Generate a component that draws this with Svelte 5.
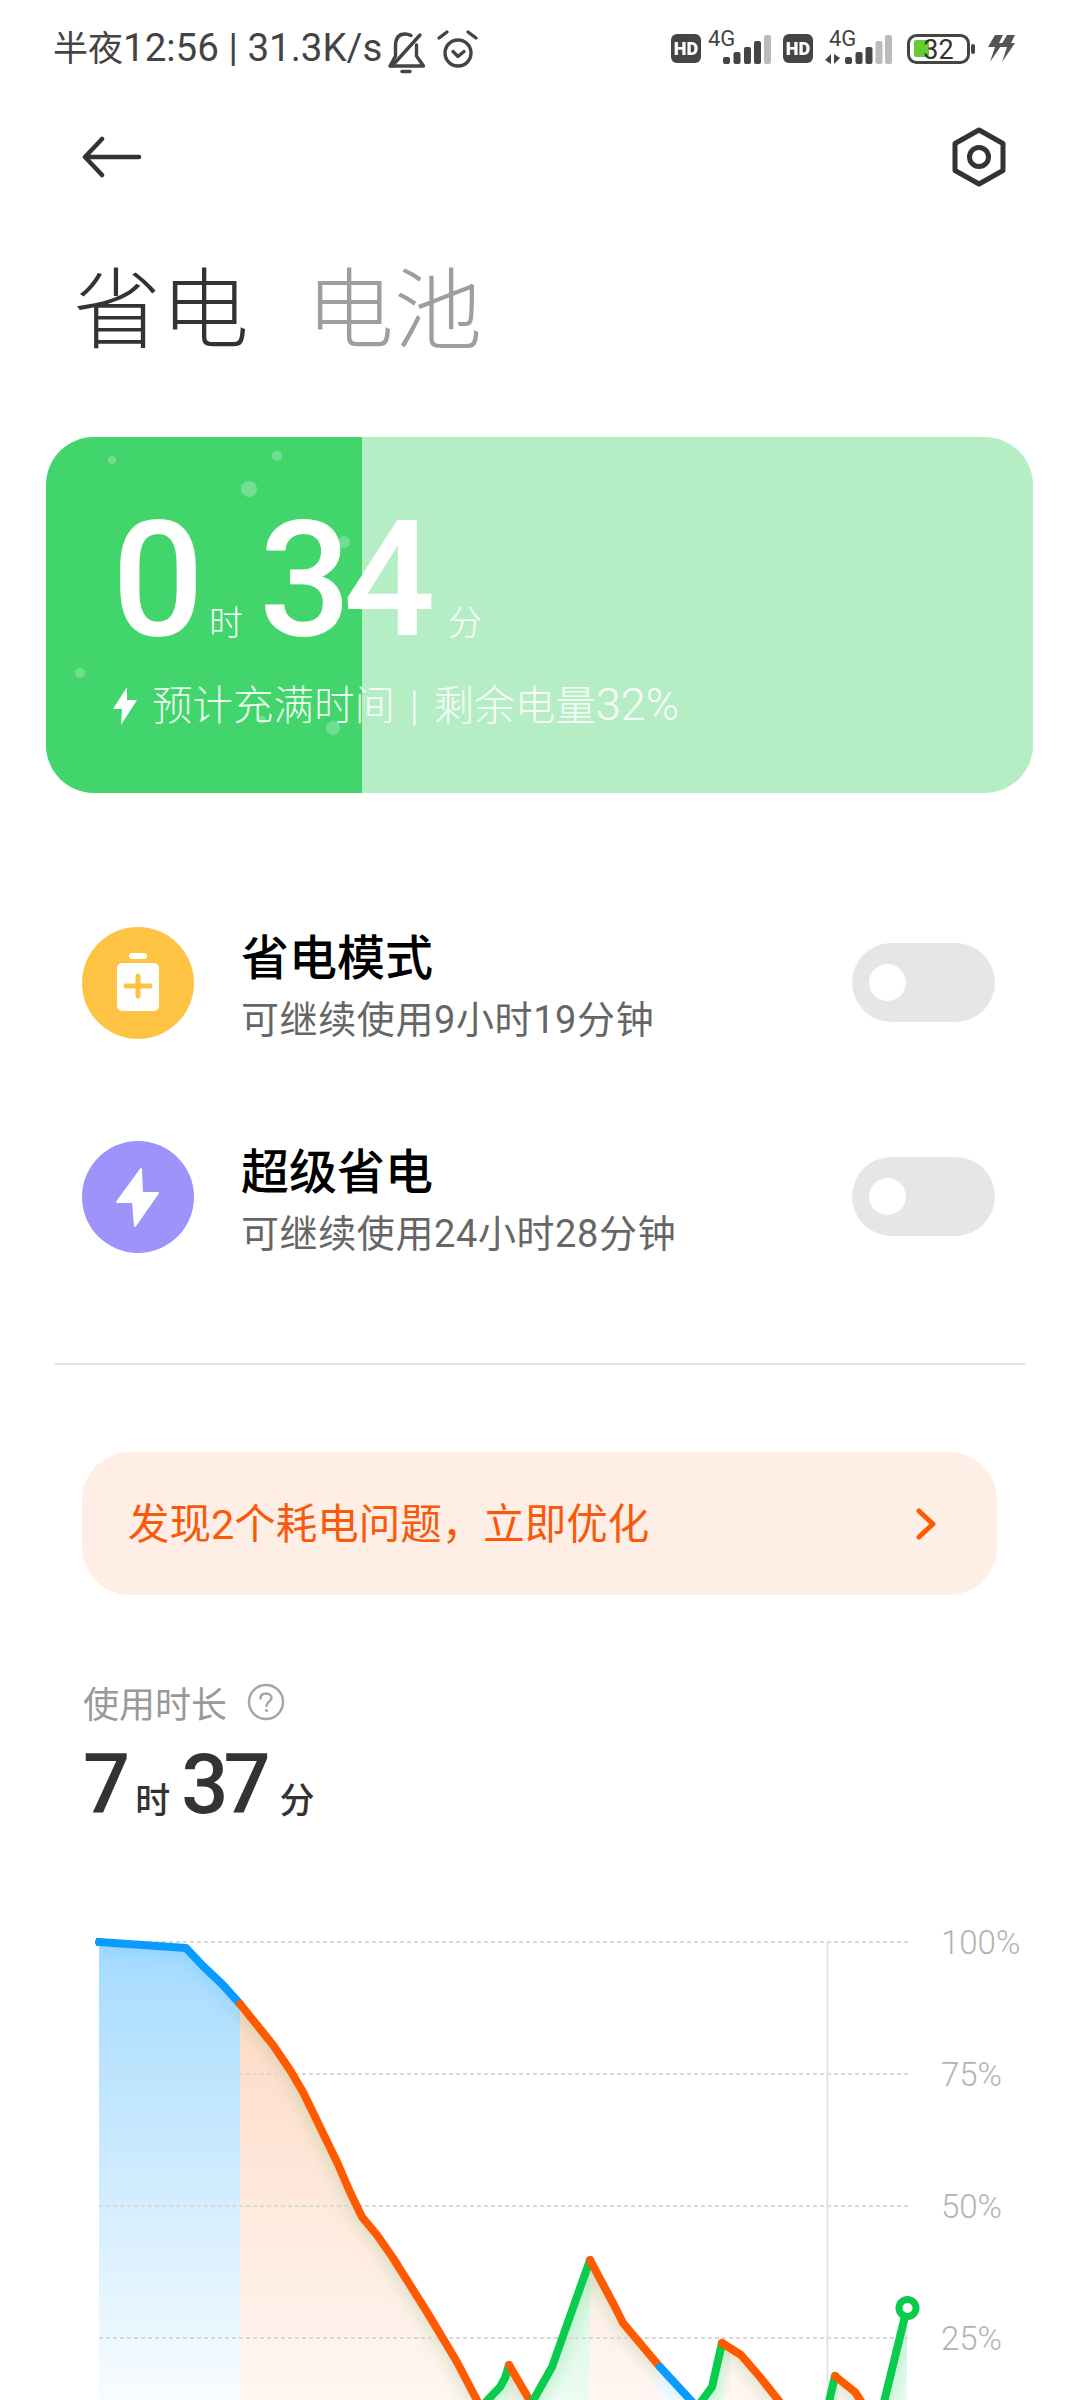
<script>
  const bubbles = [
    { x: 66, y: 23, r: 4 },
    { x: 231, y: 19, r: 5 },
    { x: 203, y: 52, r: 8 },
    { x: 298, y: 105, r: 6 },
    { x: 34, y: 236, r: 5 },
    { x: 287, y: 291, r: 7 },
    { x: 216, y: 283, r: 4 }
  ];

  const colors = { blue: "#0a9bff", orange: "#ff5a00", green: "#09cc4c" };
  const shadows = { blue: "#0a9bff", orange: "#7fae6a", green: "#09cc4c" };
  const shadowAlpha = { blue: 0.1, orange: 0.2, green: 0.15 };

  // Battery curve in page coordinates, split where the charge state changes.
  const segments = [
    { c: "blue", pts: [[99, 1942], [186, 1948], [203, 1966], [223, 1985], [240, 2004]] },
    { c: "orange", pts: [[240, 2004], [257, 2025], [273, 2045], [290, 2070], [303, 2092], [320, 2127], [337, 2162], [350, 2192], [362, 2217], [377, 2235], [393, 2258], [427, 2312], [457, 2362], [480, 2406]] },
    { c: "green", pts: [[482, 2406], [500, 2387], [505, 2378], [509, 2365]] },
    { c: "orange", pts: [[509, 2365], [533, 2406]] },
    { c: "green", pts: [[530, 2406], [552, 2367], [590, 2260]] },
    { c: "orange", pts: [[590, 2260], [614, 2305], [623, 2323], [660, 2367]] },
    { c: "blue", pts: [[660, 2367], [696, 2406]] },
    { c: "green", pts: [[698, 2406], [712, 2387], [722, 2343]] },
    { c: "orange", pts: [[722, 2343], [741, 2355], [760, 2377], [783, 2406]] },
    { c: "green", pts: [[828, 2406], [835, 2376]] },
    { c: "orange", pts: [[835, 2376], [855, 2392], [864, 2406]] },
    { c: "green", pts: [[883, 2406], [907, 2308]] }
  ];

  const line = (pts) => "M" + pts.map((p) => p.join(" ")).join("L");
  const area = (pts) =>
    line(pts) + `L${pts[pts.length - 1][0]} 2410L${pts[0][0]} 2410Z`;

  const grid = [
    { y: 1942, label: "100%" },
    { y: 2074, label: "75%" },
    { y: 2206, label: "50%" },
    { y: 2338, label: "25%" }
  ];

  const bars = [
    { x: 723, top: 57 },
    { x: 733.5, top: 52 },
    { x: 744, top: 47 },
    { x: 754, top: 41 },
    { x: 764, top: 35 }
  ];
  const bars2 = [
    { x: 845, top: 57, off: false },
    { x: 855.5, top: 52, off: false },
    { x: 865.5, top: 47, off: false },
    { x: 875.5, top: 41, off: true },
    { x: 885, top: 35, off: true }
  ];
</script>

<div class="page">
  <div class="status">
    <span class="clock"><span class="cn">半夜</span>12:56 | 31.3K/s</span>
    <svg class="st-left" width="94" height="48" viewBox="388 28 94 48" fill="none" stroke="#444" stroke-width="3.4" stroke-linecap="round" stroke-linejoin="round">
      <path d="M412 35.500C410 34.500 408 34 406 34C398 34 396.500 41 396.500 46V56L391 66H424.500L417.500 56V45" />
      <path d="M393 66L421 35" />
      <path d="M403 71.500H411" />
      <circle cx="459" cy="53" r="13" />
      <path d="M440 38L448 32M477 38L469 32" />
      <path d="M454 51.500L459 56.500L465 51.500" />
    </svg>
    <svg class="st-right" width="346" height="48" viewBox="670 20 346 48">
      <rect x="671" y="34" width="30" height="29" rx="6" fill="#444" />
      <text x="686" y="54.500" class="hd">HD</text>
      <text x="708" y="46" class="g4">4G</text>
      {#each bars as b, i}
        <rect x={b.x} y={b.top} width="7" height={64 - b.top} rx="2" fill={i === 4 ? "#bbb" : "#444"} />
      {/each}
      <rect x="783" y="34" width="30" height="29" rx="6" fill="#444" />
      <text x="798" y="54.500" class="hd">HD</text>
      <text x="829" y="46" class="g4">4G</text>
      <path d="M831 54V64L825 60ZM834 54V64L840 58Z" fill="#444" />
      {#each bars2 as b}
        <rect x={b.x} y={b.top} width="7" height={64 - b.top} rx="2" fill={b.off ? "#bbb" : "#444"} />
      {/each}
      <rect x="908.500" y="35.500" width="60" height="27" rx="8" fill="none" stroke="#444" stroke-width="3" />
      <rect x="914" y="40" width="15" height="17" rx="2" fill="#66cc33" />
      <text x="938.500" y="59" class="batt">32</text>
      <rect x="971" y="44" width="4" height="10" rx="2" fill="#444" />
      <path d="M995 35H1003L999 43H1003L990 62L995 47H988ZM1007 35H1015L1011 43H1015L1002 62L1007 47H1000Z" fill="#555" />
    </svg>
  </div>

  <div class="nav">
    <svg width="60" height="44" viewBox="0 0 60 44" fill="none" stroke="#333" stroke-width="4.500" stroke-linecap="round" stroke-linejoin="round">
      <path d="M3 22H57M20 4L3 22L20 40" />
    </svg>
    <svg width="54" height="60" viewBox="0 0 54 60" fill="none" stroke="#333" stroke-width="5" stroke-linejoin="round">
      <path d="M27 3L51 16.500V43.500L27 57L3 43.500V16.500Z" />
      <circle cx="27" cy="30" r="9.500" />
    </svg>
  </div>

  <div class="titles">
    <span class="on">省电</span>
    <span class="off">电池</span>
  </div>

  <div class="card">
    <div class="fill"></div>
    {#each bubbles as b}
      <i class="bubble" style="left:{b.x - b.r}px;top:{b.y - b.r}px;width:{b.r * 2}px;height:{b.r * 2}px"></i>
    {/each}
    <div class="card-body">
      <div class="big">
        <b>0</b><span class="unit u1">时</span><b>34</b><span class="unit u2">分</span>
      </div>
      <div class="sub">
        <svg width="26" height="40" viewBox="0 0 26 40" fill="#fff"><path d="M15 1L1 23H10L9 39L25 14H15Z" /></svg>
        <span>预计充满时间 | 剩余电量<span class="pc">32%</span></span>
      </div>
    </div>
  </div>

  <div class="modes">
    <div class="mode">
      <div class="ic yellow">
        <svg width="112" height="112" viewBox="0 0 112 112">
          <rect x="47" y="26" width="18" height="6" rx="3" fill="#fff" />
          <rect x="35" y="36" width="42" height="48" rx="5" fill="#fff" />
          <path d="M56 49V69M44 59H68" stroke="#ffc343" stroke-width="5" stroke-linecap="round" />
        </svg>
      </div>
      <div class="mode-text">
        <div class="mode-title">省电模式</div>
        <div class="mode-sub">可继续使用9小时19分钟</div>
      </div>
      <div class="toggle"><i></i></div>
    </div>
    <div class="mode">
      <div class="ic purple">
        <svg width="112" height="112" viewBox="0 0 112 112">
          <path d="M59 28L35 61H51L53 85L76 52H60Z" fill="#fff" stroke="#fff" stroke-width="2" stroke-linejoin="round" />
        </svg>
      </div>
      <div class="mode-text">
        <div class="mode-title">超级省电</div>
        <div class="mode-sub">可继续使用24小时28分钟</div>
      </div>
      <div class="toggle"><i></i></div>
    </div>
  </div>

  <div class="divider"></div>

  <div class="banner">
    <span class="banner-text">发现2个耗电问题，立即优化</span>
    <svg width="24" height="34" viewBox="0 0 24 34" fill="none" stroke="#ff5c00" stroke-width="5" stroke-linecap="round" stroke-linejoin="round">
      <path d="M5 4L19 17L5 30" />
    </svg>
  </div>

  <div class="usage">
    <div class="usage-label">
      <span>使用时长</span>
      <svg width="38" height="38" viewBox="0 0 38 38" fill="none">
        <circle cx="19" cy="19" r="17" stroke="#a6a6a6" stroke-width="2.500" />
        <path d="M13.500 15.500C13.500 12 16 10.500 19 10.500C22 10.500 24.500 12.500 24.500 15C24.500 18.500 19.500 18.500 19.500 23" stroke="#a6a6a6" stroke-width="2.500" stroke-linecap="round" />
        <circle cx="19.500" cy="27.500" r="1.600" fill="#a6a6a6" />
      </svg>
    </div>
    <div class="usage-value">
      <b>7</b><span class="uu1">时</span><b>37</b><span class="uu2">分</span>
    </div>
  </div>

  <svg class="chart" width="1080" height="500" viewBox="0 1900 1080 500">
    <defs>
      <linearGradient id="gblue" gradientUnits="userSpaceOnUse" x1="0" y1="1942" x2="0" y2="2400">
        <stop offset="0" stop-color="#0a9bff" stop-opacity="0.37" />
        <stop offset="1" stop-color="#0a9bff" stop-opacity="0.03" />
      </linearGradient>
      <linearGradient id="gorange" gradientUnits="userSpaceOnUse" x1="0" y1="1942" x2="0" y2="2400">
        <stop offset="0" stop-color="#ff5a00" stop-opacity="0.25" />
        <stop offset="1" stop-color="#ff5a00" stop-opacity="0.05" />
      </linearGradient>
      <linearGradient id="ggreen" gradientUnits="userSpaceOnUse" x1="0" y1="2200" x2="0" y2="2400">
        <stop offset="0" stop-color="#09cc4c" stop-opacity="0.2" />
        <stop offset="1" stop-color="#09cc4c" stop-opacity="0.07" />
      </linearGradient>
      <filter id="soft" x="-30%" y="-30%" width="160%" height="160%">
        <feGaussianBlur stdDeviation="7" />
      </filter>
      <clipPath id="under">
        {#each segments as s}
          <path d={area(s.pts)} />
        {/each}
      </clipPath>
    </defs>

    {#each segments as s}
      <path d={area(s.pts)} fill="url(#g{s.c})" />
    {/each}
    <g clip-path="url(#under)">
      {#each segments as s}
        <path d={line(s.pts)} fill="none" stroke={shadows[s.c]} stroke-opacity={shadowAlpha[s.c]} stroke-width="22" filter="url(#soft)" />
      {/each}
    </g>

    {#each grid as g}
      <line x1="99" x2="910" y1={g.y} y2={g.y} class="grid" />
      <text x="941" y={g.y + 12} class="pct">{g.label}</text>
    {/each}
    <line x1="827.500" x2="827.500" y1="1942" y2="2400" stroke="#e4e4e4" stroke-width="2" />

    {#each segments as s}
      <path d={line(s.pts)} fill="none" stroke={colors[s.c]} stroke-width="8" stroke-linejoin="round" stroke-linecap="round" />
    {/each}
    <path d="M96 1942H102" stroke={colors.blue} stroke-width="8" />
    <circle cx="907.500" cy="2308" r="8.500" fill="#fff" stroke={colors.green} stroke-width="7" />
  </svg>
</div>

<style>
  :global(body) {
    margin: 0;
    background: #fff;
  }

  .page {
    width: 1080px;
    height: 2400px;
    overflow: hidden;
    font-family: Roboto, "Noto Sans CJK SC", sans-serif;
    background: #fff;
  }

  .status {
    height: 100px;
    display: flex;
    align-items: flex-start;
    padding-left: 53px;
    box-sizing: border-box;
    position: relative;
  }
  .clock {
    font-size: 38.500px;
    line-height: 96px;
    color: #444;
    white-space: nowrap;
  }
  .cn {
    font-size: 35px;
  }
  .st-left {
    margin: 28px 0 0 5px;
  }
  .st-right {
    margin: 20px 64px 0 auto;
  }
  .hd {
    font-family: Roboto, sans-serif;
    font-size: 18px;
    font-weight: 900;
    fill: #fff;
    text-anchor: middle;
  }
  .g4 {
    font-family: Roboto, sans-serif;
    font-size: 22px;
    fill: #444;
  }
  .batt {
    font-family: Roboto, sans-serif;
    font-size: 27px;
    fill: #333;
    text-anchor: middle;
  }

  .nav {
    height: 114px;
    display: flex;
    align-items: center;
    justify-content: space-between;
    padding: 0 74px 0 82px;
  }

  .titles {
    margin: 47px 0 0 73px;
    height: 94px;
    line-height: 100px;
    font-size: 88px;
    font-weight: 300;
    display: flex;
    gap: 57px;
  }
  .on {
    color: #333;
  }
  .off {
    color: #9e9e9e;
  }

  .card {
    position: relative;
    margin: 82px 0 0 46px;
    width: 987px;
    height: 356px;
    border-radius: 48px;
    overflow: hidden;
    background: #b5eec5;
    color: #fff;
  }
  .fill {
    position: absolute;
    left: 0;
    top: 0;
    bottom: 0;
    width: 316px;
    background: #42d56c;
  }
  .bubble {
    position: absolute;
    border-radius: 50%;
    background: rgba(255, 255, 255, 0.25);
  }
  .card-body {
    position: relative;
    padding: 68px 0 0 66px;
  }
  .big {
    display: flex;
    align-items: baseline;
    height: 150px;
    line-height: 150px;
  }
  .big b {
    font-size: 162px;
    font-weight: 500;
    letter-spacing: -8px;
  }
  .unit {
    font-size: 34px;
    line-height: 40px;
    font-weight: 300;
  }
  .u1 {
    margin: 0 16px 0 13px;
  }
  .u2 {
    margin-left: 21px;
  }
  .sub {
    display: flex;
    align-items: center;
    gap: 14px;
    margin: 22px 0 0 0;
    font-size: 40.500px;
    line-height: 56px;
    font-weight: 300;
    word-spacing: 5px;
    color: rgba(255, 255, 255, 0.92);
    white-space: nowrap;
  }
  .pc {
    font-size: 45px;
  }

  .modes {
    margin-top: 134px;
    padding: 0 85px 0 82px;
    display: flex;
    flex-direction: column;
    gap: 102px;
  }
  .mode {
    display: flex;
    align-items: center;
    height: 112px;
  }
  .ic {
    width: 112px;
    height: 112px;
    border-radius: 50%;
    margin-right: 47px;
  }
  .ic svg {
    display: block;
  }
  .yellow {
    background: #ffc343;
  }
  .purple {
    background: #9d93fb;
  }
  .mode-text {
    padding-top: 10px;
  }
  .mode-title {
    font-size: 48px;
    line-height: 60px;
    font-weight: 500;
    color: #000;
  }
  .mode-sub {
    font-size: 38px;
    line-height: 54px;
    margin-top: 4px;
    letter-spacing: 0.6px;
    color: #666;
    white-space: nowrap;
  }
  .toggle {
    margin: -2px 0 0 auto;
    width: 143px;
    height: 79px;
    border-radius: 40px;
    background: #e6e6e6;
    display: flex;
    align-items: center;
    padding-left: 17px;
    box-sizing: border-box;
  }
  .toggle i {
    width: 37px;
    height: 37px;
    border-radius: 50%;
    background: #fff;
  }

  .divider {
    margin: 110px 55px 0;
    height: 2px;
    background: #e2e2e2;
  }

  .banner {
    margin: 87px 0 0 82px;
    width: 915px;
    height: 143px;
    box-sizing: border-box;
    padding: 0 59px 0 46px;
    border-radius: 48px;
    background: #ffeee6;
    color: #f9590b;
    font-size: 41.500px;
    display: flex;
    align-items: center;
    justify-content: space-between;
  }
  .banner-text {
    margin-top: -6px;
  }
  .banner svg {
    display: block;
  }

  .usage {
    height: 305px;
    box-sizing: border-box;
    padding: 85px 0 0 83px;
  }
  .usage-label {
    display: flex;
    align-items: center;
    gap: 20px;
    height: 44px;
    font-size: 36px;
    color: #999;
  }
  .usage-value {
    display: flex;
    align-items: baseline;
    margin-top: 16px;
    color: #333;
    height: 90px;
    line-height: 90px;
    font-weight: 500;
  }
  .usage-value b {
    font-size: 83px;
    font-weight: 500;
    letter-spacing: -5px;
  }
  .usage-value span {
    font-size: 35px;
    line-height: 40px;
  }
  .uu1 {
    margin: 0 11px 0 10px;
  }
  .uu2 {
    margin-left: 14px;
  }

  .chart {
    display: block;
  }
  .grid {
    stroke: #d8d8d8;
    stroke-width: 2;
    stroke-dasharray: 4 3;
  }
  .pct {
    font-family: Roboto, sans-serif;
    font-size: 33px;
    font-weight: 300;
    fill: #b3b3b3;
  }
</style>
